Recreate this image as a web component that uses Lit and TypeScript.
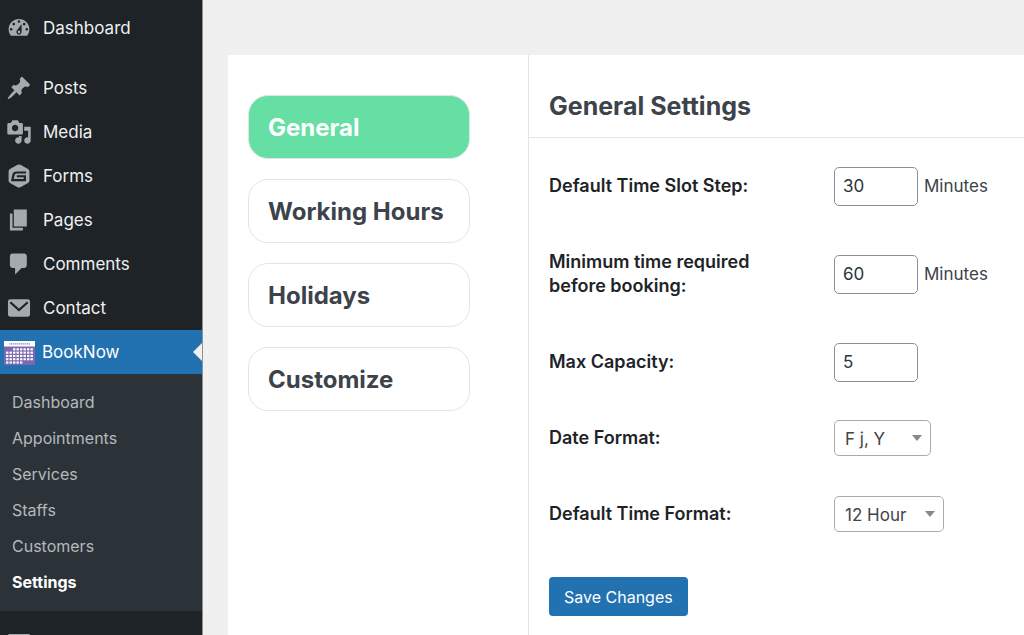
import { LitElement, html, svg, css } from "lit";
import { customElement, state } from "lit/decorators.js";
import { classMap } from "lit/directives/class-map.js";

const icons = {
  dashboard: svg`<path d="M3.76 16h12.48c1.1-1.37 1.76-3.11 1.76-5 0-4.42-3.58-8-8-8s-8 3.58-8 8c0 1.89.66 3.63 1.76 5zM10 4c.55 0 1 .45 1 1s-.45 1-1 1-1-.45-1-1 .45-1 1-1zM6 6c.55 0 1 .45 1 1s-.45 1-1 1-1-.45-1-1 .45-1 1-1zm8 0c.55 0 1 .45 1 1s-.45 1-1 1-1-.45-1-1 .45-1 1-1zm-5.37 5.55L12 7v6c0 1.1-.9 2-2 2s-2-.9-2-2c0-.57.24-1.08.63-1.45zM4 10c.55 0 1 .45 1 1s-.45 1-1 1-1-.45-1-1 .45-1 1-1zm12 0c.55 0 1 .45 1 1s-.45 1-1 1-1-.45-1-1 .45-1 1-1zm-5 3c0-.55-.45-1-1-1s-1 .45-1 1 .45 1 1 1 1-.45 1-1z"/>`,
  posts: svg`<path d="M10.44 3.02l1.82-1.82 6.36 6.35-1.83 1.82c-1.05-.68-2.48-.57-3.41.36l-.75.75c-.92.93-1.04 2.35-.35 3.41l-1.83 1.82-2.41-2.41-2.8 2.79c-.42.42-3.38 2.71-3.8 2.29s1.86-3.39 2.28-3.81l2.79-2.79L4.1 9.36l1.83-1.82c1.05.69 2.48.57 3.4-.36l.75-.75c.93-.92 1.05-2.35.36-3.41z"/>`,
  media: svg`<path d="M13 11V4c0-.55-.45-1-1-1h-1.67L9 1H5L3.67 3H2c-.55 0-1 .45-1 1v7c0 .55.45 1 1 1h10c.55 0 1-.45 1-1zM7 4.5c1.38 0 2.5 1.12 2.5 2.5S8.38 9.5 7 9.5 4.5 8.38 4.5 7 5.62 4.5 7 4.5zM14 6h5v10.5c0 1.38-1.12 2.5-2.5 2.5S14 17.88 14 16.5s1.12-2.5 2.5-2.5c.17 0 .34.02.5.05V9h-3V6zm-4 8.05V13h2v3.5c0 1.38-1.12 2.5-2.5 2.5S7 17.88 7 16.5 8.12 14 9.5 14c.17 0 .34.02.5.05z"/>`,
  forms: svg`<path d="M8.9 1.4Q10 .8 11.100 1.4L16.900 4.700Q18 5.300 18 6.600V13.400Q18 14.700 16.900 15.300L11.100 18.600Q10 19.200 8.900 18.600L3.100 15.300Q2 14.700 2 13.400V6.600Q2 5.300 3.100 4.700Z"/><path class="groove" d="M15.400 7.300H8.100Q6.100 7.300 5.700 9.300L4.900 13.100H14.500V10.200H8.300"/>`,
  pages: svg`<path d="M6 15V2h10v13H6zm-1 1h8v2H3V5h2v11z"/>`,
  comments: svg`<path d="M5 2h9c1.1 0 2 .9 2 2v7c0 1.1-.9 2-2 2h-2l-5 5v-5H5c-1.1 0-2-.9-2-2V4c0-1.100.9-2 2-2z"/>`,
  contact: svg`<path d="M3.500 3.300h13Q18.500 3.300 18.500 5.200v9.600q0 1.900-2 1.900h-13q-2 0-2-1.900V5.200q0-1.900 2-1.900z"/><path class="groove" d="M3.300 5.600L10 11.600L16.700 5.600"/>`,
  panel: svg`<rect x="1.500" y="2.300" width="17" height="15.400" rx="1"/>`,
};

const menu = [
  { label: "Posts", icon: icons.posts },
  { label: "Media", icon: icons.media },
  { label: "Forms", icon: icons.forms },
  { label: "Pages", icon: icons.pages },
  { label: "Comments", icon: icons.comments },
  { label: "Contact", icon: icons.contact },
];

const submenu = ["Dashboard", "Appointments", "Services", "Staffs", "Customers", "Settings"];

@customElement("admin-menu")
class AdminMenu extends LitElement {
  static styles = css`
    :host {
      display: block;
      box-sizing: border-box;
      height: 100vh;
      overflow: hidden;
      background: #1d2327;
      border-right: 1px solid #8e9193;
      padding-top: 6px;
    }
    ul {
      list-style: none;
      margin: 0;
      padding: 0;
    }
    a {
      color: inherit;
      text-decoration: none;
    }
    .separated {
      margin-top: 16px;
    }
    .item {
      display: flex;
      align-items: center;
      gap: 11px;
      height: 44px;
      padding-left: 6px;
      color: #f0f0f1;
      font-size: 17px;
    }
    .icon {
      width: 26px;
      height: 26px;
      flex: none;
      fill: #a7aaad;
    }
    .groove {
      fill: none;
      stroke: #1d2327;
      stroke-width: 1.7;
    }
    .current {
      position: relative;
      gap: 7px;
      padding-left: 4px;
      margin-right: -1px;
      background: #2271b1;
      color: #fff;
    }
    .current::after {
      content: "";
      position: absolute;
      right: 0;
      top: 12px;
      border: 10px solid transparent;
      border-left-width: 0;
      border-right-color: #f0f0f0;
    }
    .calendar {
      width: 31px;
      height: 24px;
      flex: none;
      margin-top: 2px;
    }
    .submenu {
      padding: 10px 0 11px;
      background: #2c3338;
      color: #b4b9be;
      font-size: 16px;
    }
    .sub {
      display: flex;
      align-items: center;
      height: 36px;
      padding-left: 12px;
    }
    .active {
      color: #fff;
      font-weight: 700;
    }
    .next {
      margin-top: 11px;
    }
  `;

  private calendar() {
    const cells = [];
    for (let row = 0; row < 5; row++) {
      for (let col = 0; col < 8; col++) {
        if ((row === 0 && col < 2) || (row === 4 && col > 4)) continue;
        cells.push(svg`<rect x=${2 + col * 3.5} y=${7.3 + row * 3.300} width="2.400" height="2.100" fill="#fff"/>`);
      }
    }
    return html`<svg class="calendar" viewBox="0 0 31 24" aria-hidden="true">
      <rect width="31" height="24" fill="#7b68ae" />
      <rect width="31" height="5.500" fill="#fff" />
      <path d="M5 2.900H26" stroke="#9a8cc0" stroke-width="1.400" stroke-dasharray="1.500 .5" />
      ${cells}
    </svg>`;
  }

  private entry(label: string, icon: unknown) {
    return html`<li>
      <a class="item" href="#"><svg class="icon" viewBox="0 0 20 20" aria-hidden="true">${icon}</svg>${label}</a>
    </li>`;
  }

  render() {
    return html`<nav>
      <ul>${this.entry("Dashboard", icons.dashboard)}</ul>
      <ul class="separated">
        ${menu.map((m) => this.entry(m.label, m.icon))}
        <li>
          <a class="item current" href="#">${this.calendar()}BookNow</a>
          <ul class="submenu">
            ${submenu.map(
              (s) => html`<li><a class=${classMap({ sub: true, active: s === "Settings" })} href="#">${s}</a></li>`
            )}
          </ul>
        </li>
      </ul>
      <ul class="next">${this.entry("", icons.panel)}</ul>
    </nav>`;
  }
}

@customElement("settings-form")
class SettingsForm extends LitElement {
  static styles = css`
    :host {
      display: block;
    }
    .title {
      margin: 0 0 24px;
      padding: 34px 20px 14px;
      font-size: 25px;
      line-height: 34px;
      font-weight: 700;
      color: #3c434a;
      border-bottom: 1px solid #e2e4e7;
    }
    form {
      padding: 0 20px;
    }
    .numbers,
    .choices {
      display: grid;
      gap: 40px;
    }
    .choices {
      margin-top: 34px;
    }
    .row {
      display: grid;
      grid-template-columns: 285px 1fr;
      align-items: center;
    }
    .numbers .row {
      min-height: 48px;
    }
    .label {
      max-width: 220px;
      font-size: 18px;
      line-height: 24px;
      font-weight: 600;
      color: #1d2327;
    }
    .field {
      display: flex;
      align-items: center;
      gap: 6px;
      font-size: 17px;
      color: #3c434a;
    }
    .number {
      box-sizing: border-box;
      width: 84px;
      height: 39px;
      padding: 0 8px;
      border: 1px solid #8c8f94;
      border-radius: 5px;
      background: #fff;
      color: #2c3338;
      font: inherit;
    }
    .picker {
      display: grid;
      align-items: center;
    }
    .picker > * {
      grid-area: 1 / 1;
    }
    .select {
      appearance: none;
      box-sizing: border-box;
      min-width: 97px;
      height: 36px;
      padding: 2px 36px 0 10px;
      border: 1px solid #aaa;
      border-radius: 5px;
      background: #fff;
      color: #444;
      font: inherit;
    }
    .arrow {
      justify-self: end;
      width: 10px;
      height: 6px;
      margin-right: 9px;
      fill: #888;
      pointer-events: none;
    }
    .save {
      height: 39px;
      margin-top: 45px;
      padding: 0 15px;
      border: 0;
      border-radius: 4px;
      background: #2271b1;
      color: #fff;
      font-family: inherit;
      font-size: 16px;
    }
  `;

  private numberRow(id: string, label: string, value: string, unit = "") {
    return html`<div class="row">
      <label class="label" for=${id}>${label}</label>
      <div class="field"><input class="number" id=${id} type="text" inputmode="numeric" .value=${value} />${unit}</div>
    </div>`;
  }

  private selectRow(id: string, label: string, value: string) {
    return html`<div class="row">
      <label class="label" for=${id}>${label}</label>
      <div class="field">
        <div class="picker">
          <select class="select" id=${id}><option>${value}</option></select>
          <svg class="arrow" viewBox="0 0 10 6" aria-hidden="true"><path d="M0 0H10L5 6Z" /></svg>
        </div>
      </div>
    </div>`;
  }

  render() {
    return html`
      <h1 class="title">General Settings</h1>
      <form @submit=${(e: Event) => e.preventDefault()}>
        <div class="numbers">
          ${this.numberRow("step", "Default Time Slot Step:", "30", "Minutes")}
          ${this.numberRow("notice", "Minimum time required before booking:", "60", "Minutes")}
          ${this.numberRow("capacity", "Max Capacity:", "5")}
        </div>
        <div class="choices">
          ${this.selectRow("date", "Date Format:", "F j, Y")}
          ${this.selectRow("time", "Default Time Format:", "12 Hour")}
        </div>
        <button class="save" type="submit">Save Changes</button>
      </form>
    `;
  }
}

@customElement("app-root")
class AppRoot extends LitElement {
  @state() private tab = "General";

  static styles = css`
    :host {
      display: grid;
      grid-template-columns: 203px 1fr;
      min-height: 100vh;
      background: #f0f0f0;
      font-family: Inter, "Liberation Sans", sans-serif;
    }
    .main {
      display: flex;
      padding: 55px 0 0 25px;
    }
    .panel {
      flex: 1;
      display: grid;
      grid-template-columns: 301px 1fr;
      background: #fff;
    }
    .tabs {
      display: flex;
      flex-direction: column;
      gap: 20px;
      padding: 40px 58px 0 20px;
      border-right: 1px solid #e2e4e7;
    }
    .tab {
      height: 64px;
      padding: 0 19px;
      border: 1px solid #e2e4e7;
      border-radius: 20px;
      background: #fff;
      color: #3c434a;
      font-family: inherit;
      font-size: 24px;
      font-weight: 700;
      text-align: left;
      white-space: nowrap;
    }
    .selected {
      background: #65dfa4;
      color: #fff;
    }
  `;

  render() {
    return html`
      <admin-menu></admin-menu>
      <main class="main">
        <div class="panel">
          <div class="tabs">
            ${["General", "Working Hours", "Holidays", "Customize"].map(
              (t) => html`<button
                type="button"
                class=${classMap({ tab: true, selected: t === this.tab })}
                @click=${() => (this.tab = t)}
              >${t}</button>`
            )}
          </div>
          <settings-form></settings-form>
        </div>
      </main>
    `;
  }
}
